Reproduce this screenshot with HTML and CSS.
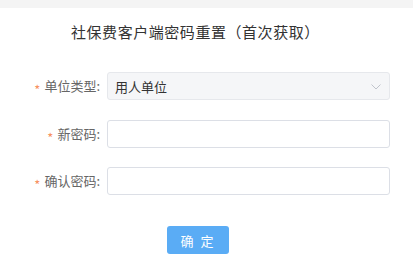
FILE: index.html
```html
<!DOCTYPE html>
<html lang="zh-CN">
<head>
<meta charset="utf-8">
<title>社保费客户端密码重置（首次获取）</title>
<link rel="stylesheet" href="styles.css">
</head>
<body>
<div class="topbar"></div>
<h1 class="title">社保费客户端密码重置（首次获取）</h1>
<form class="form">
  <div class="row">
    <label class="label"><span class="star">*</span>单位类型:</label>
    <div class="select">
      <span class="select-text">用人单位</span>
      <svg class="chevron" width="10" height="6" viewBox="0 0 10 6"><polyline points="0.5,0.5 5,5 9.5,0.5" fill="none" stroke="#c0c4cc" stroke-width="1"/></svg>
    </div>
  </div>
  <div class="row">
    <label class="label"><span class="star">*</span>新密码:</label>
    <input class="input" type="password">
  </div>
  <div class="row">
    <label class="label"><span class="star">*</span>确认密码:</label>
    <input class="input" type="password">
  </div>
  <div class="actions">
    <button type="button" class="btn">确 定</button>
  </div>
</form>
</body>
</html>
```
FILE: styles.css
```css
html, body {
  margin: 0;
  padding: 0;
  background: #ffffff;
  font-family: "Noto Sans CJK SC", "Noto Sans", "Liberation Sans", sans-serif;
}
.topbar {
  height: 8px;
  background: #f4f4f4;
}
.title {
  margin: 12px 0 0 0;
  padding-left: 71px;
  height: 24px;
  line-height: 24px;
  font-size: 15px;
  letter-spacing: 0.55px;
  font-weight: normal;
  color: #333333;
}
.form {
  margin-top: 28px;
  display: flex;
  flex-direction: column;
  gap: 19.5px;
}
.row {
  display: flex;
  align-items: center;
  height: 28px;
}
.label {
  width: 100px;
  flex: none;
  text-align: right;
  font-size: 13px;
  color: #666666;
  margin-right: 7px;
  line-height: 28px;
}
.star {
  display: inline-block;
  color: #f7925f;
  margin-right: 4px;
  font-size: 13px;
  line-height: 13px;
  vertical-align: -4px;
}
.select, .input {
  box-sizing: border-box;
  width: 283px;
  height: 28px;
  border-radius: 3px;
  flex: none;
}
.select {
  display: flex;
  align-items: center;
  justify-content: space-between;
  background: #f5f6f8;
  border: 1px solid #e6e8ec;
  padding: 0 8px 0 7px;
}
.select-text {
  font-size: 13px;
  color: #333333;
}
.chevron {
  display: block;
  margin-top: 2px;
}
.input {
  border: 1px solid #dcdfe6;
  background: #ffffff;
  padding: 0 8px;
  outline: none;
}
.actions {
  margin-top: 11.5px;
  padding-left: 167px;
}
.btn {
  width: 62px;
  height: 28px;
  border: none;
  border-radius: 3px;
  background: #5aacf5;
  color: #ffffff;
  font-family: inherit;
  font-size: 13px;
  letter-spacing: 2px;
  padding: 0;
}
```
